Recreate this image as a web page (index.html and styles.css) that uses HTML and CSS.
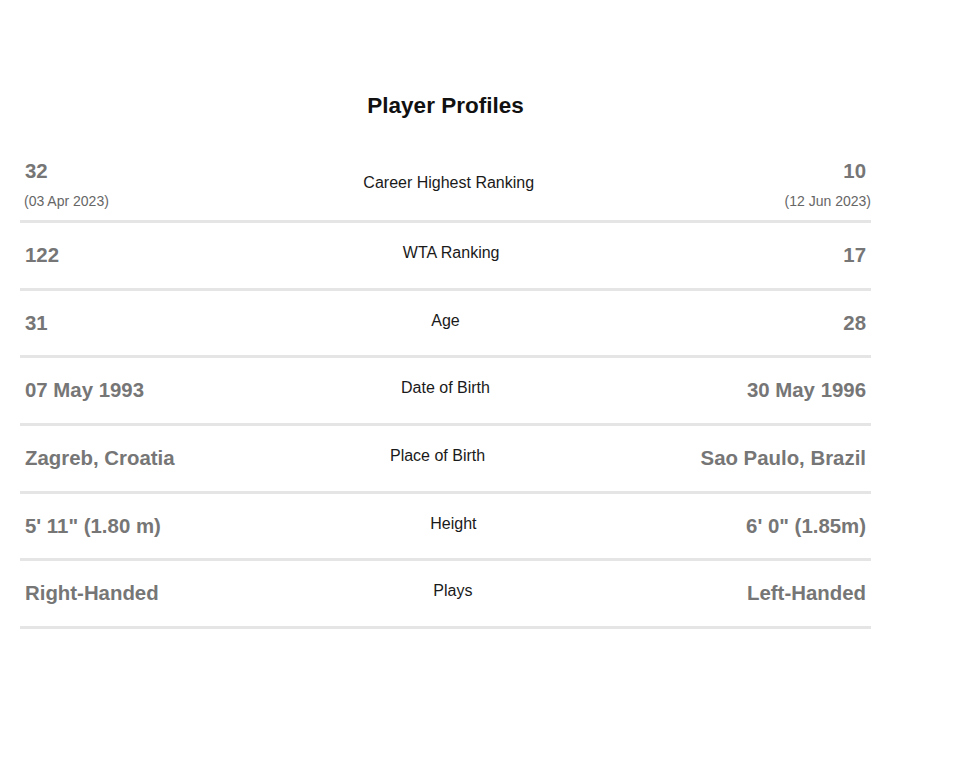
FILE: index.html
```
<!DOCTYPE html>
<html>
<head>
<meta charset="utf-8">
<link rel="stylesheet" href="styles.css">
</head>
<body>
<div class="profiles">
  <h2 class="title">Player Profiles</h2>
  <div class="row row-first">
    <div class="side left"><span class="val">32</span><span class="sub">(03 Apr 2023)</span></div>
    <div class="label">Career Highest Ranking</div>
    <div class="side right"><span class="val">10</span><span class="sub">(12 Jun 2023)</span></div>
  </div>
  <div class="row">
    <div class="side left"><span class="val">122</span></div>
    <div class="label">WTA Ranking</div>
    <div class="side right"><span class="val">17</span></div>
  </div>
  <div class="row">
    <div class="side left"><span class="val">31</span></div>
    <div class="label">Age</div>
    <div class="side right"><span class="val">28</span></div>
  </div>
  <div class="row">
    <div class="side left"><span class="val">07 May 1993</span></div>
    <div class="label">Date of Birth</div>
    <div class="side right"><span class="val">30 May 1996</span></div>
  </div>
  <div class="row">
    <div class="side left"><span class="val">Zagreb, Croatia</span></div>
    <div class="label">Place of Birth</div>
    <div class="side right"><span class="val">Sao Paulo, Brazil</span></div>
  </div>
  <div class="row">
    <div class="side left"><span class="val">5' 11" (1.80 m)</span></div>
    <div class="label">Height</div>
    <div class="side right"><span class="val">6' 0" (1.85m)</span></div>
  </div>
  <div class="row">
    <div class="side left"><span class="val">Right-Handed</span></div>
    <div class="label">Plays</div>
    <div class="side right"><span class="val">Left-Handed</span></div>
  </div>
</div>
</body>
</html>
```
FILE: styles.css
```
html, body {
  margin: 0;
  padding: 0;
  background: #fff;
}
body {
  font-family: "Liberation Sans", Arial, sans-serif;
}
.profiles {
  width: 851px;
  margin: 0 0 0 20px;
  padding-top: 93px;
}
.title {
  margin: 0 0 20px;
  text-align: center;
  font-size: 22.5px;
  line-height: 26px;
  font-weight: 700;
  color: #111;
}
.row {
  display: flex;
  justify-content: space-between;
  align-items: center;
  border-bottom: 3px solid #e5e5e5;
  padding: 20px 0 20.7px;
  min-height: 24px;
}
.row-first {
  padding: 20px 0 10px;
}
.side {
  display: flex;
  flex-direction: column;
}
.side.left { align-items: flex-start; }
.side.right { align-items: flex-end; }
.val {
  font-size: 20.4px;
  line-height: 24px;
  font-weight: 700;
  color: #767676;
  padding: 0 5px;
}
.sub {
  font-size: 14px;
  line-height: 17px;
  color: #666;
  margin-top: 10px;
  padding: 0 4px;
}
.side.right .sub { padding: 0; }
.label {
  font-size: 16px;
  line-height: 20px;
  color: #1a1a1a;
  margin-top: -4px;
}
```
